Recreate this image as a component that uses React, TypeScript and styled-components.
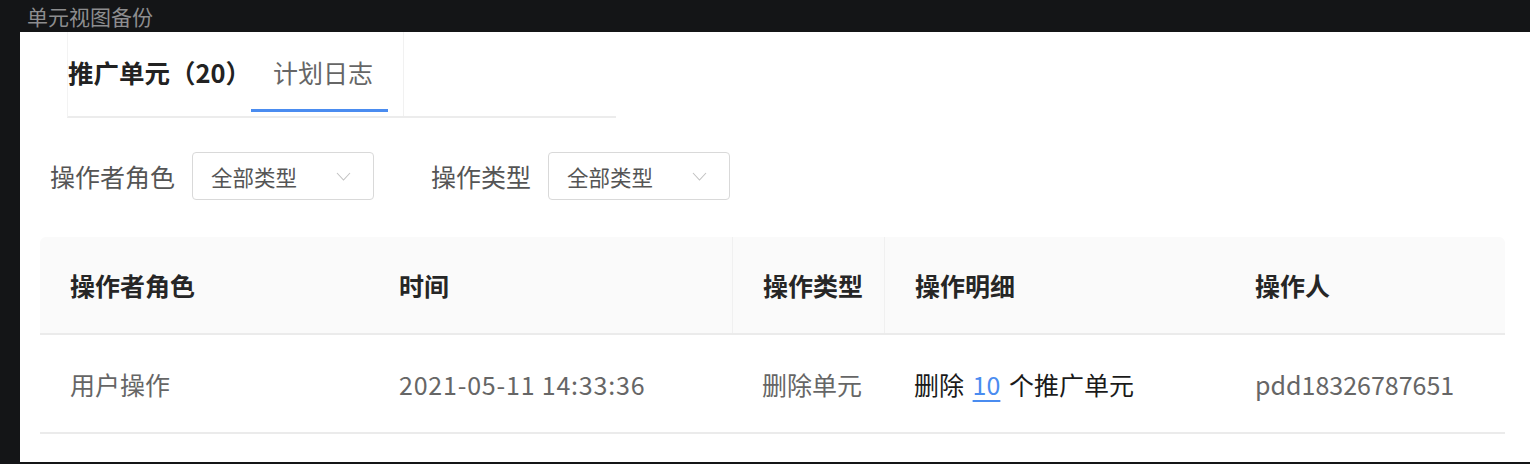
import React from 'react';
import styled, { createGlobalStyle } from 'styled-components';

const GlobalStyle = createGlobalStyle`
  body {
    margin: 0;
    background: #141517;
    font-family: 'Noto Sans CJK SC', 'Noto Sans', sans-serif;
  }
`;

interface Column {
  title: string;
  width: number;
  divider?: boolean;
}

const columns: Column[] = [
  { title: '操作者角色', width: 329 },
  { title: '时间', width: 363 },
  { title: '操作类型', width: 152, divider: true },
  { title: '操作明细', width: 341, divider: true },
  { title: '操作人', width: 280 },
];

const FilterSelect = ({ value }: { value: string }) => (
  <SelectBox>
    <span>{value}</span>
    <svg width="15" height="9" viewBox="0 0 15 9">
      <path d="M1 1 L7.5 8 L14 1" fill="none" stroke="#c2c2c2" strokeWidth="1.1" />
    </svg>
  </SelectBox>
);

const App = () => (
  <Page>
    <GlobalStyle />
    <TitleBar>单元视图备份</TitleBar>
    <Panel>
      <TabCard>
        <TabList>
          <Tab active={false} bold>
            推广单元（20）
          </Tab>
          <Tab active>计划日志</Tab>
        </TabList>
      </TabCard>

      <FilterRow>
        <FilterLabel>操作者角色</FilterLabel>
        <FilterSelect value="全部类型" />
        <FilterLabel spaced>操作类型</FilterLabel>
        <FilterSelect value="全部类型" />
      </FilterRow>

      <Table>
        <HeadRow>
          {columns.map((col) => (
            <HeadCell key={col.title} width={col.width} divider={col.divider}>
              {col.title}
            </HeadCell>
          ))}
        </HeadRow>
        <BodyRow>
          <Cell width={329}>用户操作</Cell>
          <Cell width={363} spaced>
            2021-05-11 14:33:36
          </Cell>
          <Cell width={152}>删除单元</Cell>
          <Cell width={341} dark>
            删除 <Link>10</Link> 个推广单元
          </Cell>
          <Cell width={280}>pdd18326787651</Cell>
        </BodyRow>
      </Table>
    </Panel>
  </Page>
);

const Page = styled.div`
  width: 1530px;
  height: 464px;
  overflow: hidden;
`;

const TitleBar = styled.div`
  height: 32px;
  box-sizing: border-box;
  padding: 0 0 0 27px;
  display: flex;
  align-items: center;
  font-size: 21px;
  line-height: 30px;
  color: #8d8d8f;
`;

const Panel = styled.div`
  margin-left: 20px;
  height: 430px;
  background: #ffffff;
  overflow: hidden;
`;

const TabCard = styled.div`
  margin-left: 47px;
  width: 548px;
  height: 84px;
  border-left: 1px solid #f3f3f3;
  border-bottom: 2px solid #ececec;
  display: flex;
`;

const TabList = styled.div`
  width: 335px;
  border-right: 1px solid #f1f1f1;
  display: flex;
  align-items: flex-end;
`;

const Tab = styled.div<{ active: boolean; bold?: boolean }>`
  height: 81px;
  box-sizing: border-box;
  padding-top: 24px;
  padding-left: ${({ active }) => (active ? '22px' : '0')};
  font-size: ${({ bold }) => (bold ? '25.5px' : '25px')};
  line-height: 34px;
  color: ${({ bold }) => (bold ? '#222222' : '#666666')};
  font-weight: ${({ bold }) => (bold ? 700 : 400)};
  border-bottom: 3px solid ${({ active }) => (active ? '#4a8cf0' : 'transparent')};
  width: ${({ active }) => (active ? '137px' : 'auto')};
  margin-bottom: 4px;
`;

const FilterRow = styled.div`
  display: flex;
  align-items: center;
  margin-top: 34px;
  padding-left: 30px;
`;

const FilterLabel = styled.span<{ spaced?: boolean }>`
  font-size: 25px;
  color: #555555;
  margin-right: 17px;
  margin-left: ${({ spaced }) => (spaced ? '57px' : '0')};
`;

const SelectBox = styled.div`
  width: 182px;
  height: 48px;
  box-sizing: border-box;
  border: 1px solid #d9d9d9;
  border-radius: 4px;
  display: flex;
  align-items: center;
  justify-content: space-between;
  padding: 0 22px 0 18px;
  font-size: 21.5px;
  color: #555555;
`;

const Table = styled.div`
  margin: 37px 25px 0 20px;
`;

const HeadRow = styled.div`
  display: flex;
  height: 96px;
  background: #fafafa;
  border-radius: 6px 6px 0 0;
  border-bottom: 2px solid #ebebeb;
`;

const HeadCell = styled.div<{ width: number; divider?: boolean }>`
  width: ${({ width }) => width}px;
  box-sizing: border-box;
  padding-left: 30px;
  display: flex;
  align-items: center;
  font-size: 25px;
  font-weight: 700;
  color: #262626;
  border-left: ${({ divider }) => (divider ? '1px solid #f0f0f0' : 'none')};
`;

const BodyRow = styled.div`
  display: flex;
  height: 97px;
  border-bottom: 2px solid #ebebeb;
`;

const Cell = styled.div<{ width: number; dark?: boolean; spaced?: boolean }>`
  width: ${({ width }) => width}px;
  box-sizing: border-box;
  padding-left: 30px;
  display: flex;
  align-items: center;
  white-space: pre;
  font-size: 25px;
  letter-spacing: ${({ spaced }) => (spaced ? '0.8px' : '0')};
  word-spacing: ${({ dark }) => (dark ? '3px' : '0')};
  color: ${({ dark }) => (dark ? '#1a1a1a' : '#666666')};
`;

const Link = styled.span`
  color: #4a8cf0;
  text-decoration: underline;
  text-underline-offset: 5px;
`;

export default App;
